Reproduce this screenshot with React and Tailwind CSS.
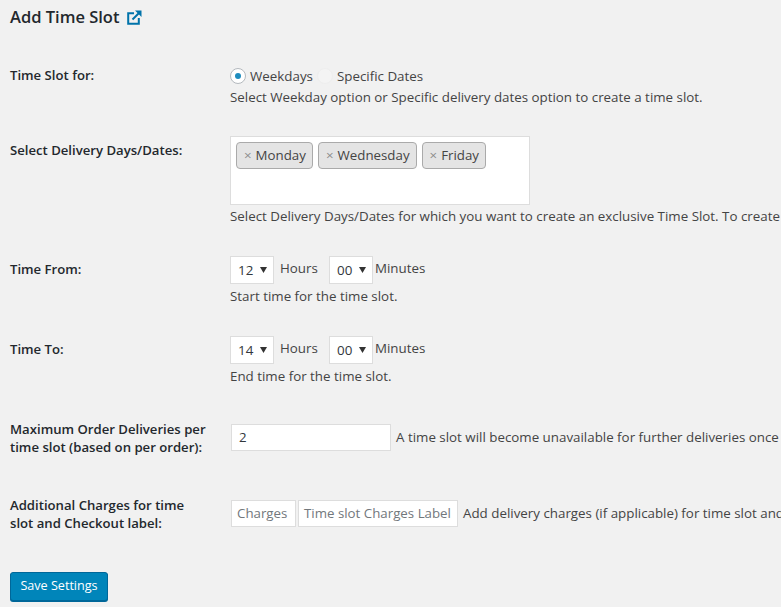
const font = { fontFamily: '"Open Sans", sans-serif' }

function Chip({ label }) {
  return (
    <span className="flex h-[27px] items-center rounded-[4px] border border-[#aaa] bg-[#e4e4e4] pl-[7px] pr-[6px] text-[13.3px] text-[#444]">
      <span className="mr-[4px] text-[#888]">×</span>
      {label}
    </span>
  )
}

function FakeSelect({ value }) {
  return (
    <span className="flex h-[28px] w-[44px] shrink-0 items-center justify-between border border-[#ddd] bg-white pl-[7px] pr-[4px] text-[13.4px] text-[#32373c]">
      {value}
      <svg width="7" height="6" viewBox="0 0 7 6" className="mr-[2px]">
        <path d="M0 0h7L3.5 6z" fill="#333" />
      </svg>
    </span>
  )
}

function TextBox({ width, className, children }) {
  return (
    <span className={'flex h-[27px] shrink-0 items-center border border-[#ddd] bg-white text-[13.3px] ' + width + ' ' + className}>
      {children}
    </span>
  )
}

function Row({ label, className, labelClass, children }) {
  return (
    <div className={'flex ' + className}>
      <div className={'w-[220px] shrink-0 pr-[20px] text-[13.15px] font-semibold leading-[18px] text-[#23282d] ' + labelClass}>{label}</div>
      <div className="min-w-0 flex-1 text-[13.35px] text-[#444]">{children}</div>
    </div>
  )
}

function TimeRow({ hours }) {
  return (
    <div className="flex h-[28px] items-start">
      <FakeSelect value={hours} />
      <span className="ml-[6px] w-[49px] leading-[24px]">Hours</span>
      <FakeSelect value="00" />
      <span className="ml-[2px] leading-[24px]">Minutes</span>
    </div>
  )
}

export default function App() {
  return (
    <div style={font} className="h-[607px] w-[781px] overflow-hidden whitespace-nowrap bg-[#f1f1f1] pl-[10px]">
      <h1 className="flex h-[34px] items-center gap-[8px] text-[16.5px] font-semibold text-[#23282d]">
        Add Time Slot
        <svg width="15" height="15" viewBox="0 0 15 15" fill="none" stroke="#0073aa" strokeWidth="2">
          <path d="M7 3.2H1.2v10.6H11.8V8" />
          <path d="M5.5 9.5 12 3" />
          <path d="M8 .5h6.5V7z" fill="#0073aa" stroke="none" />
        </svg>
      </h1>

      <Row label="Time Slot for:" className="mt-[32px]">
        <div className="flex h-[20px] items-center">
          <span className="flex h-[16px] w-[16px] items-center justify-center rounded-full border border-[#b4b9be] bg-white">
            <span className="h-[6px] w-[6px] rounded-full bg-[#1e8cbe]" />
          </span>
          <span className="ml-[4px]">Weekdays</span>
          <span className="ml-[4px] h-[16px] w-[16px] rounded-full border border-[#eee] bg-[#f4f4f4]" />
          <span className="ml-[4px]">Specific Dates</span>
        </div>
        <p className="mt-[1px] leading-[20px]">Select Weekday option or Specific delivery dates option to create a time slot.</p>
      </Row>

      <Row label="Select Delivery Days/Dates:" className="mt-[29px]" labelClass="pt-[5px]">
        <div className="flex h-[69px] w-[300px] items-start gap-[5px] border border-[#ddd] bg-white pl-[5px] pt-[5px]">
          <Chip label="Monday" />
          <Chip label="Wednesday" />
          <Chip label="Friday" />
        </div>
        <p className="mt-[1px] leading-[20px]">Select Delivery Days/Dates for which you want to create an exclusive Time Slot. To create</p>
      </Row>

      <Row label="Time From:" className="mt-[30px]" labelClass="pt-[4px]">
        <TimeRow hours="12" />
        <p className="mt-[2px] leading-[20px]">Start time for the time slot.</p>
      </Row>

      <Row label="Time To:" className="mt-[30px]" labelClass="pt-[4px]">
        <TimeRow hours="14" />
        <p className="mt-[2px] leading-[20px]">End time for the time slot.</p>
      </Row>

      <Row label={<>Maximum Order Deliveries per<br />time slot (based on per order):</>} className="mt-[34px]">
        <div className="flex items-center pt-[4px]">
          <TextBox width="w-[160px]" className="ml-[1px] pl-[7px] text-[#32373c]">2</TextBox>
          <span className="ml-[5px]">A time slot will become unavailable for further deliveries once the</span>
        </div>
      </Row>

      <Row label={<>Additional Charges for time<br />slot and Checkout label:</>} className="mt-[40px]">
        <div className="flex items-center pt-[4px]">
          <TextBox width="w-[65px]" className="ml-[1px] pl-[5px] text-[#72777c]">Charges</TextBox>
          <TextBox width="w-[160px]" className="ml-[2px] pl-[5px] text-[#72777c]">Time slot Charges Label</TextBox>
          <span className="ml-[5px]">Add delivery charges (if applicable) for time slot and</span>
        </div>
      </Row>

      <button className="mt-[40px] h-[29px] w-[98px] rounded-[3px] border border-[#006799] bg-[#0085ba] text-[12.6px] text-white shadow-[0_1px_0_#006799]">
        Save Settings
      </button>
    </div>
  )
}
